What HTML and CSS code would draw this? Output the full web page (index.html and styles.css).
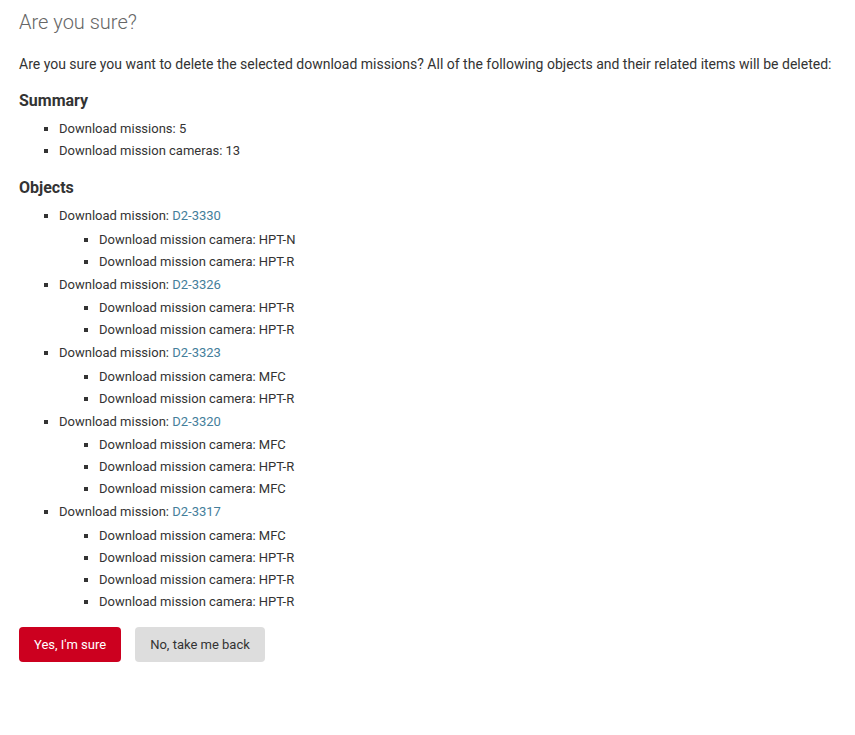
FILE: index.html
```html
<!DOCTYPE html>
<html lang="en">
<head>
<meta charset="utf-8">
<title>Are you sure?</title>
<link rel="stylesheet" href="styles.css">
</head>
<body>
<div class="content">
  <h1 class="title">Are you sure?</h1>
  <p class="intro">Are you sure you want to delete the selected download missions? All of the following objects and their related items will be deleted:</p>
  <h2 class="section">Summary</h2>
  <ul class="list">
    <li>Download missions: 5</li>
    <li>Download mission cameras: 13</li>
  </ul>
  <h2 class="section">Objects</h2>
  <ul class="list">
    <li>Download mission: <a class="link" href="#">D2-3330</a>
      <ul class="sublist">
        <li>Download mission camera: HPT-N</li>
        <li>Download mission camera: HPT-R</li>
      </ul>
    </li>
    <li>Download mission: <a class="link" href="#">D2-3326</a>
      <ul class="sublist">
        <li>Download mission camera: HPT-R</li>
        <li>Download mission camera: HPT-R</li>
      </ul>
    </li>
    <li>Download mission: <a class="link" href="#">D2-3323</a>
      <ul class="sublist">
        <li>Download mission camera: MFC</li>
        <li>Download mission camera: HPT-R</li>
      </ul>
    </li>
    <li>Download mission: <a class="link" href="#">D2-3320</a>
      <ul class="sublist">
        <li>Download mission camera: MFC</li>
        <li>Download mission camera: HPT-R</li>
        <li>Download mission camera: MFC</li>
      </ul>
    </li>
    <li>Download mission: <a class="link" href="#">D2-3317</a>
      <ul class="sublist">
        <li>Download mission camera: MFC</li>
        <li>Download mission camera: HPT-R</li>
        <li>Download mission camera: HPT-R</li>
        <li>Download mission camera: HPT-R</li>
      </ul>
    </li>
  </ul>
  <div class="actions">
    <button class="btn btn-delete" type="button">Yes, I'm sure</button>
    <a class="btn btn-cancel" href="#">No, take me back</a>
  </div>
</div>
</body>
</html>
```

FILE: styles.css
```css
html, body {
  margin: 0;
  padding: 0;
  background: #fff;
}
body {
  font-family: Roboto, "Liberation Sans", Arial, sans-serif;
  font-size: 14px;
  color: #333;
}
.content {
  padding: 10px 19px 40px;
}
.title {
  margin: 0 0 20px;
  font-size: 20px;
  line-height: 24px;
  font-weight: 300;
  color: #666;
}
.intro {
  margin: 0 0 17px;
  font-size: 14px;
  line-height: 20px;
}
.section {
  margin: 16px 0 8px;
  font-size: 16px;
  line-height: 19px;
  font-weight: 700;
  color: #333;
}
.list {
  margin: 0 0 13px;
  padding-left: 40px;
}
.list li {
  list-style-type: square;
  padding: 1px 0;
  font-size: 13px;
  line-height: 20px;
}
.sublist {
  margin: 0;
  padding: 2.6px 0 0 40px;
}
.link {
  color: #447e9b;
  text-decoration: none;
}
.actions {
  display: flex;
  gap: 14px;
  margin-top: 13px;
}
.btn {
  display: inline-block;
  box-sizing: border-box;
  height: 35px;
  padding: 0 15px;
  border: none;
  border-radius: 4px;
  font-family: Roboto, "Liberation Sans", Arial, sans-serif;
  font-size: 13px;
  line-height: 35px;
  text-decoration: none;
  cursor: pointer;
}
.btn-delete {
  background: #cc001f;
  color: #fff;
}
.btn-cancel {
  background: #dddddd;
  color: #333;
}
```
